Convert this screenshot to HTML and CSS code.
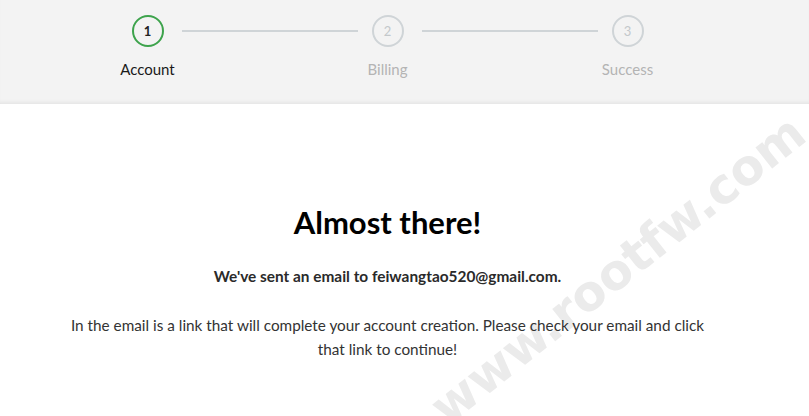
FILE: index.html
```html
<!DOCTYPE html>
<html>
<head>
<meta charset="utf-8">
<link rel="stylesheet" href="styles.css">
</head>
<body>
<div class="watermark">www.rootfw.com</div>
<header class="steps-bar">
  <div class="steps">
    <div class="step active">
      <div class="circle">1</div>
      <div class="label">Account</div>
    </div>
    <div class="line"></div>
    <div class="step">
      <div class="circle">2</div>
      <div class="label">Billing</div>
    </div>
    <div class="line"></div>
    <div class="step">
      <div class="circle">3</div>
      <div class="label">Success</div>
    </div>
  </div>
</header>
<main class="content">
  <h1 class="title">Almost there!</h1>
  <p class="sent">We've sent an email to feiwangtao520@gmail.com.</p>
  <p class="info">In the email is a link that will complete your account creation. Please check your email and click that link to continue!</p>
</main>
</body>
</html>
```
FILE: styles.css
```css
html {
  background: #fff;
}
html, body {
  margin: 0;
  padding: 0;
  font-family: "Lato", "Open Sans", sans-serif;
  overflow: hidden;
  height: 416px;
}
.steps-bar {
  position: relative;
  z-index: -2;
  background: #f3f3f3;
  height: 104px;
  box-shadow: inset 0 -4px 4px -3px rgba(0,0,0,0.08);
}
.steps {
  width: 775px;
  display: flex;
  justify-content: center;
  align-items: flex-start;
  padding-top: 15px;
}
.step {
  width: 32px;
  display: flex;
  flex-direction: column;
  align-items: center;
}
.circle {
  width: 28px;
  height: 28px;
  border: 2px solid #cfd4d7;
  border-radius: 50%;
  display: flex;
  align-items: center;
  justify-content: center;
  font-size: 13px;
  color: #c3c8cb;
}
.step.active .circle {
  border-color: #3da34c;
  color: #222;
  font-weight: 700;
}
.label {
  margin-top: 13px;
  font-size: 15px;
  color: #b4b4b4;
  white-space: nowrap;
}
.step.active .label {
  color: #1a1a1a;
}
.line {
  width: 176px;
  height: 2px;
  background: #cfd4d7;
  margin: 15px 14px 0 18px;
}
.content {
  width: 775px;
  text-align: center;
  padding-top: 98px;
}
.title {
  margin: 0;
  font-size: 31px;
  font-weight: 700;
  color: #000;
  line-height: 40px;
}
.sent {
  margin: 22px 0 0;
  font-size: 15.4px;
  font-weight: 700;
  color: #2a2a2a;
  line-height: 24px;
}
.info {
  margin: 25px auto 0;
  width: 660px;
  font-size: 15.3px;
  color: #333;
  line-height: 24px;
}
.watermark {
  position: absolute;
  z-index: -1;
  left: 618px;
  top: 270px;
  font-family: "DejaVu Sans", Verdana, sans-serif;
  font-weight: 700;
  font-size: 49px;
  line-height: 1;
  color: #ebebeb;
  transform: translate(-50%, -50%) rotate(-38.5deg);
  white-space: nowrap;
  pointer-events: none;
}
```
